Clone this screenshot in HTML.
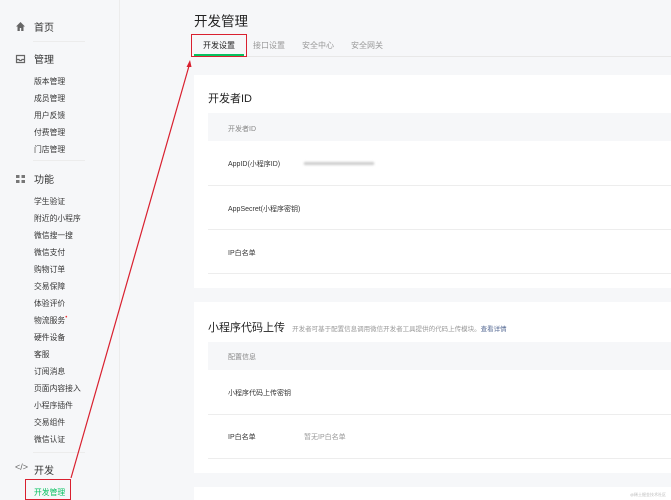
<!DOCTYPE html>
<html><head><meta charset="utf-8"><style>
*{margin:0;padding:0;box-sizing:border-box}
body{width:671px;height:500px;overflow:hidden;background:#f6f7f9;font-family:"Liberation Sans","Noto Sans CJK SC",sans-serif;position:relative;color:#353535}
.a{position:absolute;white-space:nowrap}
.nav{font-size:10px;color:#353535}
.sub{font-size:7.8px;color:#353535;left:34px}
.div{position:absolute;left:33px;width:52px;height:1px;background:#ececec}
.card{position:absolute;left:194px;width:477px;background:#fff}
.hd{position:absolute;left:208px;width:463px;background:#f6f7f9}
.ln{position:absolute;left:208px;width:463px;height:1px;background:#ededed}
.sm{font-size:7px;color:#353535}
</style></head><body>
<div class="a" style="left:119px;top:0;width:1px;height:500px;background:#ececec"></div>
<svg class="a" style="left:15px;top:21px" width="11" height="11" viewBox="0 0 11 11"><path d="M5.5 1L1 5.5h1.5V10h2.3V7h1.4v3h2.3V5.5H10z" fill="#666"/></svg>
<div class="a nav" style="left:34px;top:19px">首页</div>
<div class="div" style="top:41px"></div>
<svg class="a" style="left:15px;top:54px" width="11" height="10" viewBox="0 0 11 10"><path d="M1.5 1.5h8v7h-8z M1.5 5.5h2.5l.7 1h1.6l.7-1h2.5" fill="none" stroke="#666" stroke-width="1.2"/></svg>
<div class="a nav" style="left:34px;top:51px">管理</div>
<div class="a sub" style="top:76px">版本管理</div>
<div class="a sub" style="top:93px">成员管理</div>
<div class="a sub" style="top:110px">用户反馈</div>
<div class="a sub" style="top:127px">付费管理</div>
<div class="a sub" style="top:144px">门店管理</div>
<div class="div" style="top:160px"></div>
<svg class="a" style="left:16px;top:175px" width="10" height="9" viewBox="0 0 10 9"><rect x="0" y="0" width="3.5" height="3" fill="#777"/><rect x="5.5" y="0" width="3.5" height="3" fill="#777"/><rect x="0" y="5" width="3.5" height="3" fill="#777"/><rect x="5.5" y="5" width="3.5" height="3" fill="#777"/></svg>
<div class="a nav" style="left:34px;top:171px">功能</div>
<div class="a sub" style="top:196px">学生验证</div>
<div class="a sub" style="top:213px">附近的小程序</div>
<div class="a sub" style="top:230px">微信搜一搜</div>
<div class="a sub" style="top:247px">微信支付</div>
<div class="a sub" style="top:264px">购物订单</div>
<div class="a sub" style="top:281px">交易保障</div>
<div class="a sub" style="top:298px">体验评价</div>
<div class="a sub" style="top:315px">物流服务<span style="color:#e33;font-size:6px;vertical-align:top">•</span></div>
<div class="a sub" style="top:332px">硬件设备</div>
<div class="a sub" style="top:349px">客服</div>
<div class="a sub" style="top:366px">订阅消息</div>
<div class="a sub" style="top:383px">页面内容接入</div>
<div class="a sub" style="top:400px">小程序插件</div>
<div class="a sub" style="top:417px">交易组件</div>
<div class="a sub" style="top:434px">微信认证</div>
<div class="div" style="top:452px"></div>
<div class="a" style="left:15px;top:462px;font-size:9px;color:#666">&lt;/&gt;</div>
<div class="a nav" style="left:34px;top:462px">开发</div>
<div class="a sub" style="top:487px;color:#07c160">开发管理</div>
<div class="a" style="left:25px;top:479px;width:46px;height:21px;border:1.5px solid #d9202f"></div>

<div class="a" style="left:194px;top:10px;font-size:13.5px;color:#222">开发管理</div>
<div class="a" style="left:194px;top:56px;width:477px;height:1px;background:#e8e8e8"></div>
<div class="a" style="left:203px;top:40px;font-size:8px;color:#222">开发设置</div>
<div class="a" style="left:194px;top:54px;width:50px;height:2px;background:#07c160"></div>
<div class="a" style="left:253px;top:40px;font-size:8px;color:#999">接口设置</div>
<div class="a" style="left:302px;top:40px;font-size:8px;color:#999">安全中心</div>
<div class="a" style="left:351px;top:40px;font-size:8px;color:#999">安全网关</div>
<div class="a" style="left:191px;top:34px;width:56px;height:23px;border:1.5px solid #d9202f"></div>

<div class="card" style="top:75px;height:213px"></div>
<div class="a" style="left:208px;top:90px;font-size:11px;color:#222">开发者ID</div>
<div class="hd" style="top:113px;height:28px"></div>
<div class="a sm" style="left:228px;top:124px;color:#888">开发者ID</div>
<div class="a sm" style="left:228px;top:159px">AppID(小程序ID)</div>
<div class="a" style="left:304px;top:162px;width:70px;height:3px;background:#ccc;filter:blur(1px)"></div>
<div class="ln" style="top:185px"></div>
<div class="a sm" style="left:228px;top:204px">AppSecret(小程序密钥)</div>
<div class="ln" style="top:229px"></div>
<div class="a sm" style="left:228px;top:248px">IP白名单</div>
<div class="ln" style="top:273px"></div>

<div class="card" style="top:302px;height:171px"></div>
<div class="a" style="left:208px;top:319px;font-size:11px;color:#222">小程序代码上传 <span style="font-size:6.5px;color:#999;margin-left:4px">开发者可基于配置信息调用微信开发者工具提供的代码上传模块。<span style="color:#576b95">查看详情</span></span></div>
<div class="hd" style="top:342px;height:28px"></div>
<div class="a sm" style="left:228px;top:352px;color:#888">配置信息</div>
<div class="a sm" style="left:228px;top:388px">小程序代码上传密钥</div>
<div class="ln" style="top:414px"></div>
<div class="a sm" style="left:228px;top:432px">IP白名单</div>
<div class="a sm" style="left:304px;top:432px;color:#999">暂无IP白名单</div>
<div class="ln" style="top:458px"></div>
<div class="card" style="top:487px;height:13px"></div>
<div class="a" style="left:630px;top:492px;font-size:4px;color:#bbb">@稀土掘金技术社区</div>

<svg class="a" style="left:0;top:0" width="671" height="500"><line x1="71" y1="478" x2="189" y2="66" stroke="#d9202f" stroke-width="1.2"/><path d="M190 60l-3.5 7h5z" fill="#d9202f"/></svg>
</body></html>
